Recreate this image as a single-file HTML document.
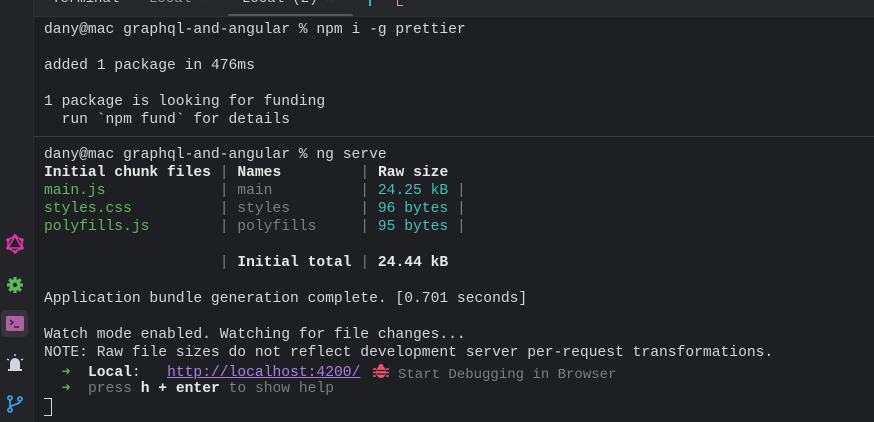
<!DOCTYPE html>
<html><head><meta charset="utf-8"><style>
*{margin:0;padding:0;box-sizing:border-box}
body{width:874px;height:422px;background:#1e1f22;overflow:hidden;position:relative;font-family:"Liberation Mono",monospace;font-size:14.65px;color:#d4d4d4}
#side{position:absolute;left:0;top:0;width:34px;height:422px;background:#232428;border-right:1px solid #2c2d31}
#tabs{position:absolute;left:34px;top:0;right:0;height:17px;background:#26272b;border-bottom:1px solid #303135;color:#9a9a9a;font-family:"Liberation Mono",monospace;font-size:14px;overflow:hidden}
#sep{position:absolute;left:34px;right:0;top:136px;height:1px;background:#3a3b3f}
.l{position:absolute;left:44px;white-space:pre;line-height:18px}
.g{color:#5fb85a}.m{color:#7d7d7d}.c{color:#3fc3b4}.b{font-weight:bold;color:#e6e6e6}.u{color:#a67fe8;text-decoration:underline}
.ic{position:absolute;left:5px}
</style></head><body>
<div id="side">
<svg class="ic" style="top:234px" width="20" height="20" viewBox="0 0 20 20"><g fill="none" stroke="#e535ab" stroke-width="1.6"><polygon points="10,2 17,6 17,14 10,18 3,14 3,6"/><polygon points="10,2 17,14 3,14"/></g><g fill="#e535ab"><circle cx="10" cy="2" r="1.8"/><circle cx="17" cy="6" r="1.8"/><circle cx="17" cy="14" r="1.8"/><circle cx="10" cy="18" r="1.8"/><circle cx="3" cy="14" r="1.8"/><circle cx="3" cy="6" r="1.8"/></g></svg>
<svg class="ic" style="top:275px" width="20" height="20" viewBox="0 0 20 20"><g stroke="#5fb85a" stroke-width="3.2"><path d="M10 2v16M2 10h16M4.3 4.3l11.4 11.4M15.7 4.3L4.3 15.7"/></g><circle cx="10" cy="10" r="5.8" fill="#5fb85a"/><circle cx="10" cy="10" r="2.2" fill="#232428"/></svg>
<div style="position:absolute;left:1px;top:310px;width:27px;height:27px;background:#34353a;border-radius:5px"></div>
<svg class="ic" style="top:315px" width="20" height="17" viewBox="0 0 20 17"><rect x="1" y="1" width="18" height="15" rx="1.5" fill="#b05fa0"/><path d="M5 5l3 2.5-3 2.5M9 12h5" stroke="#2a2a2e" stroke-width="1.4" fill="none"/></svg>
<svg class="ic" style="top:353px" width="20" height="20" viewBox="0 0 20 20"><path d="M5 16v-6a5 5 0 0110 0v6z" fill="#cfd6df"/><rect x="3" y="16" width="14" height="2" fill="#cfd6df"/><path d="M10 1v2M2 6l2 1M18 6l-2 1" stroke="#cfd6df" stroke-width="1.4"/></svg>
<svg class="ic" style="top:394px" width="20" height="20" viewBox="0 0 20 20"><g fill="none" stroke="#3a9ee8" stroke-width="1.8"><circle cx="5" cy="4" r="2"/><circle cx="5" cy="16" r="2"/><circle cx="15" cy="5" r="2"/><path d="M5 6v8M15 7c0 4-9 3-10 7"/></g></svg>
</div>
<div id="tabs">
<span style="position:absolute;left:18px;top:-9px;color:#ccc">Terminal</span>
<span style="position:absolute;left:115px;top:-9px">Local <span style="color:#777">×</span></span>
<span style="position:absolute;left:208px;top:-9px;color:#ccc">Local (2) <span style="color:#777">×</span></span>
<div style="position:absolute;left:194px;top:14px;width:125px;height:4px;background:#55575c;border-radius:2px"></div>
<div style="position:absolute;left:335px;top:0;width:2px;height:6px;background:#2bb3c0"></div>
<div style="position:absolute;left:363px;top:0;width:6px;height:6px;border:1.5px solid #e58cc0;border-top:none;border-right:none"></div>
</div>
<div id="sep"></div>
<div class="l" style="top:21px">dany@mac graphql-and-angular % npm i -g prettier</div>
<div class="l" style="top:57px">added 1 package in 476ms</div>
<div class="l" style="top:93px">1 package is looking for funding</div>
<div class="l" style="top:111px">  run `npm fund` for details</div>
<div class="l" style="top:146px">dany@mac graphql-and-angular % ng serve</div>
<div class="l" style="top:164px"><span class="b">Initial chunk files</span> <span class="m">|</span> <span class="b">Names</span>         <span class="m">|</span> <span class="b">Raw size</span></div>
<div class="l" style="top:182px"><span class="g">main.js</span>             <span class="m">| main          |</span> <span class="c">24.25 kB</span> <span class="m">|</span></div>
<div class="l" style="top:200px"><span class="g">styles.css</span>          <span class="m">| styles        |</span> <span class="c">96 bytes</span> <span class="m">|</span></div>
<div class="l" style="top:218px"><span class="g">polyfills.js</span>        <span class="m">| polyfills     |</span> <span class="c">95 bytes</span> <span class="m">|</span></div>
<div class="l" style="top:254px">                    <span class="m">|</span> <span class="b">Initial total</span> <span class="m">|</span> <span class="b">24.44 kB</span></div>
<div class="l" style="top:290px">Application bundle generation complete. [0.701 seconds]</div>
<div class="l" style="top:326px">Watch mode enabled. Watching for file changes...</div>
<div class="l" style="top:344px">NOTE: Raw file sizes do not reflect development server per-request transformations.</div>
<div class="l" style="top:364px">  <span class="g">➜</span>  <span class="b">Local</span>:   <span class="u">http://localhost:4200/</span></div>
<div class="l m" style="top:366px;left:398px;font-size:14px">Start Debugging in Browser</div>
<svg style="position:absolute;left:373px;top:363px" width="16" height="16" viewBox="0 0 16 16"><ellipse cx="8" cy="9" rx="5" ry="6" fill="#f0506e"/><circle cx="8" cy="3.5" r="2.5" fill="#f0506e"/><path d="M0 6h3M13 6h3M0 9.5h3M13 9.5h3M0 13h3M13 13h3" stroke="#f0506e" stroke-width="1.6"/><path d="M4 7.5h8M4 11h8" stroke="#1e1f22" stroke-width="1.2"/></svg>
<div class="l" style="top:380px">  <span class="g">➜</span>  <span class="m">press</span> <span class="b">h + enter</span> <span class="m">to show help</span></div>
<div style="position:absolute;left:44px;top:398px;width:8px;height:18px;border:1.5px solid #d4d4d4;border-left:none"></div>
</body></html>
